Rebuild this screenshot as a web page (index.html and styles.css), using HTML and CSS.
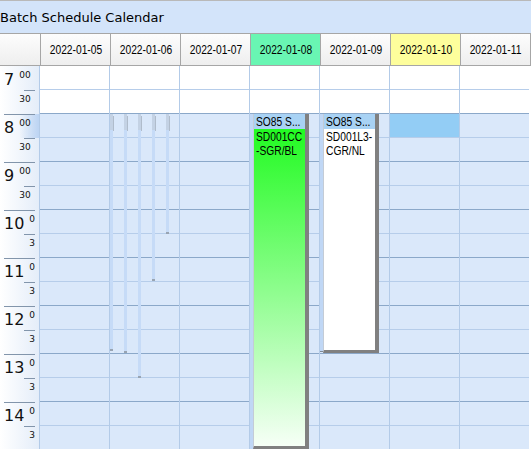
FILE: index.html
```html
<!DOCTYPE html>
<html>
<head>
<meta charset="utf-8">
<title>Batch Schedule Calendar</title>
<link rel="stylesheet" href="styles.css">
</head>
<body>
<div class="cal">
  <div class="title">Batch Schedule Calendar</div>
  <div class="head">
    <div class="corner"></div>
    <div class="dh"><span class="nar">2022-01-05</span></div>
    <div class="dh"><span class="nar">2022-01-06</span></div>
    <div class="dh"><span class="nar">2022-01-07</span></div>
    <div class="dh today"><span class="nar">2022-01-08</span></div>
    <div class="dh"><span class="nar">2022-01-09</span></div>
    <div class="dh mark"><span class="nar">2022-01-10</span></div>
    <div class="dh last"><span class="nar">2022-01-11</span></div>
  </div>
  <div class="grid">
    <div class="times">
      <div class="t hr first"><div class="lbl"><span class="hn">7</span><span class="mn">00</span></div></div>
      <div class="t half"><div class="lbl"><span class="hn ghost">7</span><span class="mn">30</span></div></div>
      <div class="t hr cur"><div class="lbl"><span class="hn">8</span><span class="mn">00</span></div></div>
      <div class="t half"><div class="lbl"><span class="hn ghost">8</span><span class="mn">30</span></div></div>
      <div class="t hr"><div class="lbl"><span class="hn">9</span><span class="mn">00</span></div></div>
      <div class="t half"><div class="lbl"><span class="hn ghost">9</span><span class="mn">30</span></div></div>
      <div class="t hr"><div class="lbl"><span class="hn">10</span><span class="mn">0</span></div></div>
      <div class="t half"><div class="lbl"><span class="hn ghost">10</span><span class="mn">3</span></div></div>
      <div class="t hr"><div class="lbl"><span class="hn">11</span><span class="mn">0</span></div></div>
      <div class="t half"><div class="lbl"><span class="hn ghost">11</span><span class="mn">3</span></div></div>
      <div class="t hr"><div class="lbl"><span class="hn">12</span><span class="mn">0</span></div></div>
      <div class="t half"><div class="lbl"><span class="hn ghost">12</span><span class="mn">3</span></div></div>
      <div class="t hr"><div class="lbl"><span class="hn">13</span><span class="mn">0</span></div></div>
      <div class="t half"><div class="lbl"><span class="hn ghost">13</span><span class="mn">3</span></div></div>
      <div class="t hr"><div class="lbl"><span class="hn">14</span><span class="mn">0</span></div></div>
      <div class="t half"><div class="lbl"><span class="hn ghost">14</span><span class="mn">3</span></div></div>
    </div>

    <div class="day">
      <div class="slots">
        <div class="s"></div><div class="s"></div><div class="s"></div><div class="s"></div>
        <div class="s"></div><div class="s"></div><div class="s"></div><div class="s"></div>
        <div class="s"></div><div class="s"></div><div class="s"></div><div class="s"></div>
        <div class="s"></div><div class="s"></div><div class="s"></div><div class="s"></div>
      </div>
    </div>

    <div class="day">
      <div class="slots">
        <div class="s"></div><div class="s"></div><div class="s"></div><div class="s"></div>
        <div class="s"></div><div class="s"></div><div class="s"></div><div class="s"></div>
        <div class="s"></div><div class="s"></div><div class="s"></div><div class="s"></div>
        <div class="s"></div><div class="s"></div><div class="s"></div><div class="s"></div>
      </div>
      <div class="mini m1"></div>
      <div class="mini m2"></div>
      <div class="mini m3"></div>
      <div class="mini m4"></div>
      <div class="mini m5"></div>
    </div>

    <div class="day">
      <div class="slots">
        <div class="s"></div><div class="s"></div><div class="s"></div><div class="s"></div>
        <div class="s"></div><div class="s"></div><div class="s"></div><div class="s"></div>
        <div class="s"></div><div class="s"></div><div class="s"></div><div class="s"></div>
        <div class="s"></div><div class="s"></div><div class="s"></div><div class="s"></div>
      </div>
    </div>

    <div class="day">
      <div class="slots">
        <div class="s"></div><div class="s"></div><div class="s"></div><div class="s"></div>
        <div class="s"></div><div class="s"></div><div class="s"></div><div class="s"></div>
        <div class="s"></div><div class="s"></div><div class="s"></div><div class="s"></div>
        <div class="s"></div><div class="s"></div><div class="s"></div><div class="s"></div>
      </div>
      <div class="strip st1"></div>
      <div class="ev green ev1">
        <div class="eh"><span class="nar">SO85 S...</span></div>
        <div class="eb"><span class="nar">SD001CC</span><br><span class="nar">-SGR/BL</span></div>
      </div>
    </div>

    <div class="day">
      <div class="slots">
        <div class="s"></div><div class="s"></div><div class="s"></div><div class="s"></div>
        <div class="s"></div><div class="s"></div><div class="s"></div><div class="s"></div>
        <div class="s"></div><div class="s"></div><div class="s"></div><div class="s"></div>
        <div class="s"></div><div class="s"></div><div class="s"></div><div class="s"></div>
      </div>
      <div class="strip st2"></div>
      <div class="ev white ev2">
        <div class="eh"><span class="nar">SO85 S...</span></div>
        <div class="eb"><span class="nar">SD001L3-</span><br><span class="nar">CGR/NL</span></div>
      </div>
    </div>

    <div class="day">
      <div class="slots">
        <div class="s"></div><div class="s"></div><div class="s sel"></div><div class="s"></div>
        <div class="s"></div><div class="s"></div><div class="s"></div><div class="s"></div>
        <div class="s"></div><div class="s"></div><div class="s"></div><div class="s"></div>
        <div class="s"></div><div class="s"></div><div class="s"></div><div class="s"></div>
      </div>
    </div>

    <div class="day">
      <div class="slots">
        <div class="s"></div><div class="s"></div><div class="s"></div><div class="s"></div>
        <div class="s"></div><div class="s"></div><div class="s"></div><div class="s"></div>
        <div class="s"></div><div class="s"></div><div class="s"></div><div class="s"></div>
        <div class="s"></div><div class="s"></div><div class="s"></div><div class="s"></div>
      </div>
    </div>
  </div>
</div>
</body>
</html>
```

FILE: styles.css
```css
html, body {
  margin: 0;
  padding: 0;
}

body {
  width: 531px;
  height: 449px;
  overflow: hidden;
  background: #ffffff;
  font-family: "DejaVu Sans", sans-serif;
  color: #000;
}

.cal {
  width: 531px;
}

.title {
  height: 32px;
  border-top: 1px solid #b9b9b9;
  background: #d3e4fa;
  font-size: 13px;
  line-height: 34px;
  white-space: nowrap;
  overflow: hidden;
}

.head {
  display: flex;
  height: 31px;
  border-top: 1px solid #a6a6a6;
  border-bottom: 1px solid #a6a6a6;
  background: linear-gradient(#fdfdfd, #eeeeee);
}

.corner {
  width: 40px;
  flex: none;
}

/* narrow sans text, emulated by horizontally compressing Liberation Sans */
.nar {
  display: inline-block;
  font-family: "Liberation Sans", Arial, sans-serif;
  transform: scaleX(0.82);
  transform-origin: 0 50%;
  white-space: nowrap;
}

.dh {
  width: 70px;
  flex: none;
  box-sizing: border-box;
  border-left: 1px solid #a6a6a6;
  font-size: 12.5px;
  line-height: 31px;
  text-align: center;
  white-space: nowrap;
  overflow: hidden;
}

.dh .nar {
  transform-origin: 50% 50%;
  margin: 0 -6px;
}

.dh.last {
  width: 71px;
  border-right: 1px solid #a6a6a6;
}

.dh.today {
  background: #69f6b3;
}

.dh.mark {
  background: #fefe9c;
}

.grid {
  display: flex;
  height: 384px;
  overflow: hidden;
}

.times {
  width: 39px;
  flex: none;
  background: linear-gradient(to right, #ffffff, #e4edf9);
}

.t {
  height: 24px;
}

.t.cur {
  background: linear-gradient(to right, rgba(194, 216, 244, 0) 50%, #bcd4f3);
}

.lbl {
  margin-left: 4px;
  width: 33px;
  height: 24px;
  box-sizing: border-box;
  padding-top: 3px;
  line-height: 21px;
  font-size: 16px;
  white-space: nowrap;
}

.hr .lbl {
  background: linear-gradient(#8295ab, #8295ab) no-repeat 0 0 / 31px 1px;
}

.hr.first .lbl {
  background: none;
}

.half .lbl {
  background: linear-gradient(#8295ab, #8295ab) no-repeat 20px 0 / 11px 1px;
}

.hn {
  color: #111;
}

.ghost {
  visibility: hidden;
}

.mn {
  font-size: 9px;
  line-height: 1;
  vertical-align: 7px;
  margin-left: 5px;
  color: #111;
}

.day {
  position: relative;
  width: 70px;
  flex: none;
  box-sizing: border-box;
  border-left: 1px solid #b3cbe8;
}

.s {
  height: 23px;
  border-bottom: 1px solid #b6cdea;
  background: #dae8fa;
}

.slots .s:nth-child(even) {
  border-bottom-color: #8ba8c9;
}

.slots .s:nth-child(-n+2) {
  background: #ffffff;
}

.slots .s.sel {
  background: #93cdf5;
}

/* event strips and boxes */
.strip {
  position: absolute;
  top: 48px;
  left: 0;
  width: 3px;
  background: #c0d7f5;
}

.st1 {
  height: 340px;
}

.st2 {
  height: 237px;
  border-bottom: 1px solid #7f8a96;
}

.mini {
  position: absolute;
  top: 48px;
  width: 3px;
  background: linear-gradient(#c4d2e4 0, #c4d2e4 16px, #c6dbf7 16px);
  border-bottom: 2px solid #98a4b2;
}

.mini::after {
  content: "";
  position: absolute;
  left: 3px;
  top: 2px;
  width: 1px;
  height: 15px;
  background: #b0bccb;
}

.m1 { left: 0; height: 235px; }
.m2 { left: 14px; height: 237px; }
.m3 { left: 28px; height: 262px; }
.m4 { left: 42px; height: 165px; }
.m5 { left: 56px; height: 118px; }

.ev {
  position: absolute;
  top: 48px;
  left: 3px;
  width: 56px;
  box-sizing: border-box;
  display: flex;
  flex-direction: column;
  border-left: 1px solid #c4ccd6;
  border-right: 4px solid #808080;
  border-bottom: 3px solid #808080;
  overflow: hidden;
  font-size: 12.5px;
  white-space: nowrap;
}

.ev1 {
  height: 335px;
}

.ev2 {
  height: 239px;
}

.eh {
  height: 15px;
  flex: none;
  line-height: 15px;
  padding-left: 2px;
  background: #a8d2f4;
  overflow: hidden;
}

.eb {
  flex: 1;
  padding: 1px 0 0 2px;
  line-height: 14px;
  overflow: hidden;
}

.green .eb {
  background: linear-gradient(#22fb22, #f6fff6);
}

.white .eb {
  background: #ffffff;
}
```
